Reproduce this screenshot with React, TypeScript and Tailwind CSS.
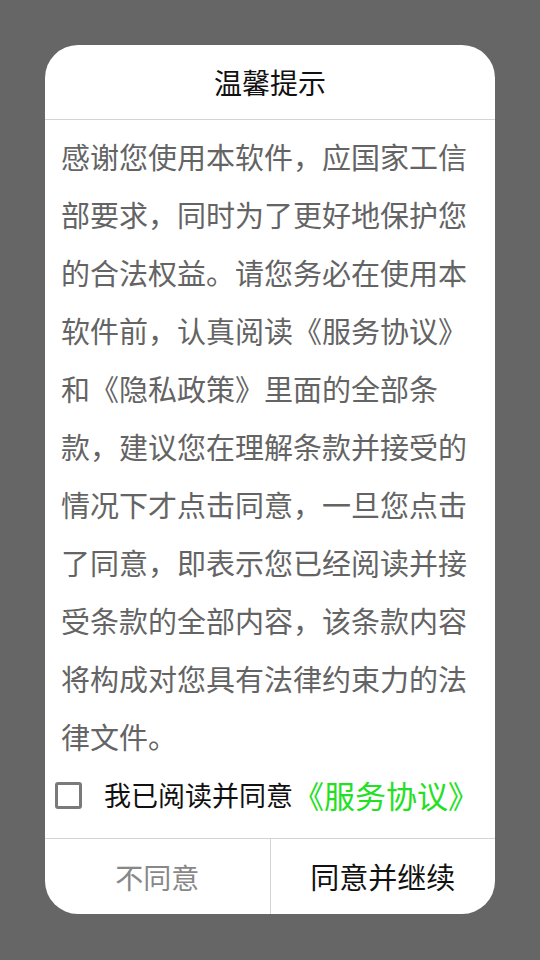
import { useState } from "react"

const FONT = { fontFamily: '"Noto Sans CJK SC", "Noto Sans", sans-serif' }

export default function App() {
  const [checked, setChecked] = useState(false)

  return (
    <div className="min-h-[960px] w-full bg-[#666666] pt-[45px]" style={FONT}>
      <div className="mx-[45px] flex flex-col overflow-hidden rounded-[33px] bg-white">
        <div className="flex h-[75px] items-center justify-center border-b border-[#d4d4d4] text-[28px] text-[#111]">
          温馨提示
        </div>
        <p className="px-4 pt-[7px] text-[29px] leading-[58px] text-[#646464]">
          感谢您使用本软件，应国家工信部要求，同时为了更好地保护您的合法权益。请您务必在使用本软件前，认真阅读《服务协议》和《隐私政策》里面的全部条款，建议您在理解条款并接受的情况下才点击同意，一旦您点击了同意，即表示您已经阅读并接受条款的全部内容，该条款内容将构成对您具有法律约束力的法律文件。
        </p>
        <div className="flex h-[60px] items-center pl-[10px]">
          <button
            type="button"
            onClick={() => setChecked(!checked)}
            className="size-[27px] rounded-[3px] border-[3px] border-[#7a7a7a]"
          />
          <span className="ml-[22px] text-[27px] text-[#111]">我已阅读并同意</span>
          <span className="text-[31px] text-[#22e022]">《服务协议》</span>
        </div>
        <div className="mt-[13px] flex h-[76px] border-t border-[#d4d4d4]">
          <button type="button" className="flex-1 text-[28px] text-[#888]">
            不同意
          </button>
          <div className="w-px bg-[#d4d4d4]" />
          <button type="button" className="flex-1 text-[29px] text-[#111]">
            同意并继续
          </button>
        </div>
      </div>
    </div>
  )
}
